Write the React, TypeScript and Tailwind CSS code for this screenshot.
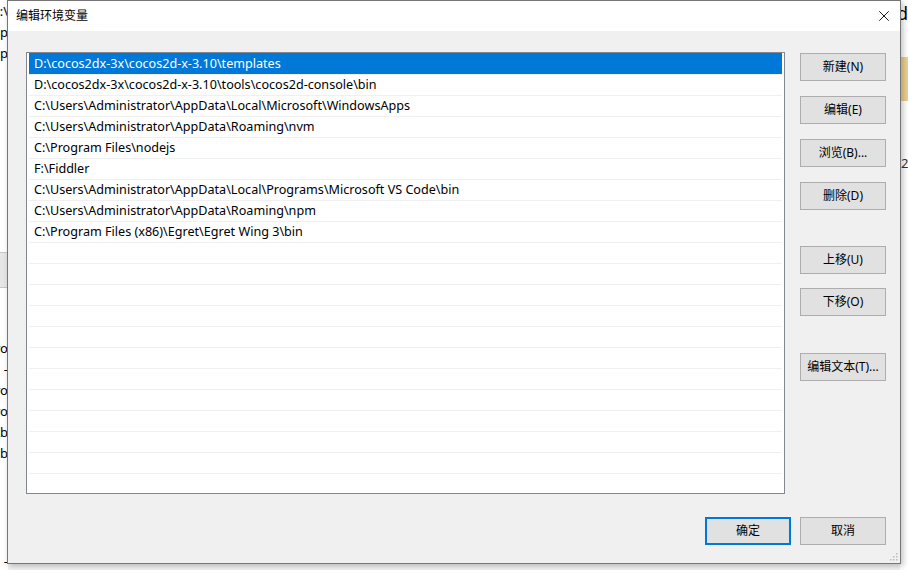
import { X } from "lucide-react";

const paths = [
  "D:\\cocos2dx-3x\\cocos2d-x-3.10\\templates",
  "D:\\cocos2dx-3x\\cocos2d-x-3.10\\tools\\cocos2d-console\\bin",
  "C:\\Users\\Administrator\\AppData\\Local\\Microsoft\\WindowsApps",
  "C:\\Users\\Administrator\\AppData\\Roaming\\nvm",
  "C:\\Program Files\\nodejs",
  "F:\\Fiddler",
  "C:\\Users\\Administrator\\AppData\\Local\\Programs\\Microsoft VS Code\\bin",
  "C:\\Users\\Administrator\\AppData\\Roaming\\npm",
  "C:\\Program Files (x86)\\Egret\\Egret Wing 3\\bin",
];

const TOTAL_ROWS = 21;

function Btn({ label, primary }: { label: string; primary?: boolean }) {
  return (
    <button
      className={
        "w-[86px] h-[28px] bg-[#e1e1e1] text-[12px] text-black flex items-center justify-center " +
        (primary ? "border-2 border-[#0078d7]" : "border border-[#adadad]")
      }
    >
      {label}
    </button>
  );
}

export default function App() {
  const rows = Array.from({ length: TOTAL_ROWS }, (_, i) => paths[i] ?? "");

  return (
    <div
      className="relative w-[908px] h-[570px] overflow-hidden bg-[#f2f2f2]"
      style={{ fontFamily: '"Noto Sans", "Noto Sans CJK SC", sans-serif' }}
    >
      {/* window behind, left edge */}
      <div className="absolute left-0 top-0 w-[8px] h-[570px] bg-white overflow-hidden text-[13px] text-black leading-[21px]">
        <div className="flex flex-col items-end pt-[1px]">
          <div>D:\</div>
          <div>p</div>
          <div>p</div>
        </div>
        <div className="absolute left-0 top-[252px] w-[8px] h-[36px] bg-[#e6e6e6] border-y border-[#c8c8c8]" />
        <div className="absolute right-0 top-[338px] flex flex-col items-end leading-[21px]">
          <div>ro</div>
          <div>-</div>
          <div>ro</div>
          <div>ro</div>
          <div>Ab</div>
          <div>b</div>
        </div>
        <div className="absolute right-0 top-[553px] leading-[16px]">-</div>
      </div>

      {/* window behind, right edge */}
      <div className="absolute left-[900px] top-0 w-[8px] h-[570px] bg-white overflow-hidden">
        <div className="-ml-[3px] pt-[1px] text-[18px] leading-[24px] text-black">d</div>
        <div className="mt-[32px] w-[8px] h-[44px] bg-[#ecd08a]" />
        <div className="mt-[54px] pl-[1px] text-[13px] leading-[16px] text-[#333]">20</div>
      </div>

      {/* dialog */}
      <div className="absolute left-[7px] top-0 w-[894px] h-[564px] bg-[#f0f0f0] border border-[#767676] shadow-[2px_2px_6px_rgba(0,0,0,0.25)] flex flex-col">
        <div className="h-[30px] bg-white flex items-center justify-between pl-[8px] pr-[7px] shrink-0">
          <span className="text-[12px] text-black">编辑环境变量</span>
          <X className="w-[18px] h-[18px] text-black" strokeWidth={1.2} />
        </div>

        <div className="flex pl-[18px] pt-[21px]">
          <div className="w-[759px] h-[442px] border border-[#828790] bg-white px-[2px] overflow-hidden">
            {rows.map((p, i) => (
              <div
                key={i}
                className={
                  "h-[21px] flex items-center pl-[5px] pt-[1px] text-[12.6px] whitespace-nowrap " +
                  (i === 0
                    ? "bg-[#0078d7] text-white"
                    : "text-black border-t border-[#f0f0f0]")
                }
              >
                {p}
              </div>
            ))}
          </div>

          <div className="ml-[15px] mt-[1px] flex flex-col">
            <div className="flex flex-col gap-[15px]">
              <Btn label="新建(N)" />
              <Btn label="编辑(E)" />
              <Btn label="浏览(B)..." />
              <Btn label="删除(D)" />
            </div>
            <div className="mt-[36px] flex flex-col gap-[14px]">
              <Btn label="上移(U)" />
              <Btn label="下移(O)" />
            </div>
            <div className="mt-[37px]">
              <Btn label="编辑文本(T)..." />
            </div>
          </div>
        </div>

        <div className="flex justify-end gap-[9px] pr-[14px] mt-[23px]">
          <Btn label="确定" primary />
          <Btn label="取消" />
        </div>

        <div className="flex-1 flex items-end justify-end pr-[2px] pb-[2px]">
          <svg width="8" height="8" viewBox="0 0 8 8">
            <rect x="6" y="0" width="1.5" height="1.5" fill="#bcbcbc" />
            <rect x="3" y="3" width="1.5" height="1.5" fill="#bcbcbc" />
            <rect x="6" y="3" width="1.5" height="1.5" fill="#bcbcbc" />
            <rect x="0" y="6" width="1.5" height="1.5" fill="#bcbcbc" />
            <rect x="3" y="6" width="1.5" height="1.5" fill="#bcbcbc" />
            <rect x="6" y="6" width="1.5" height="1.5" fill="#bcbcbc" />
          </svg>
        </div>
      </div>
    </div>
  );
}
